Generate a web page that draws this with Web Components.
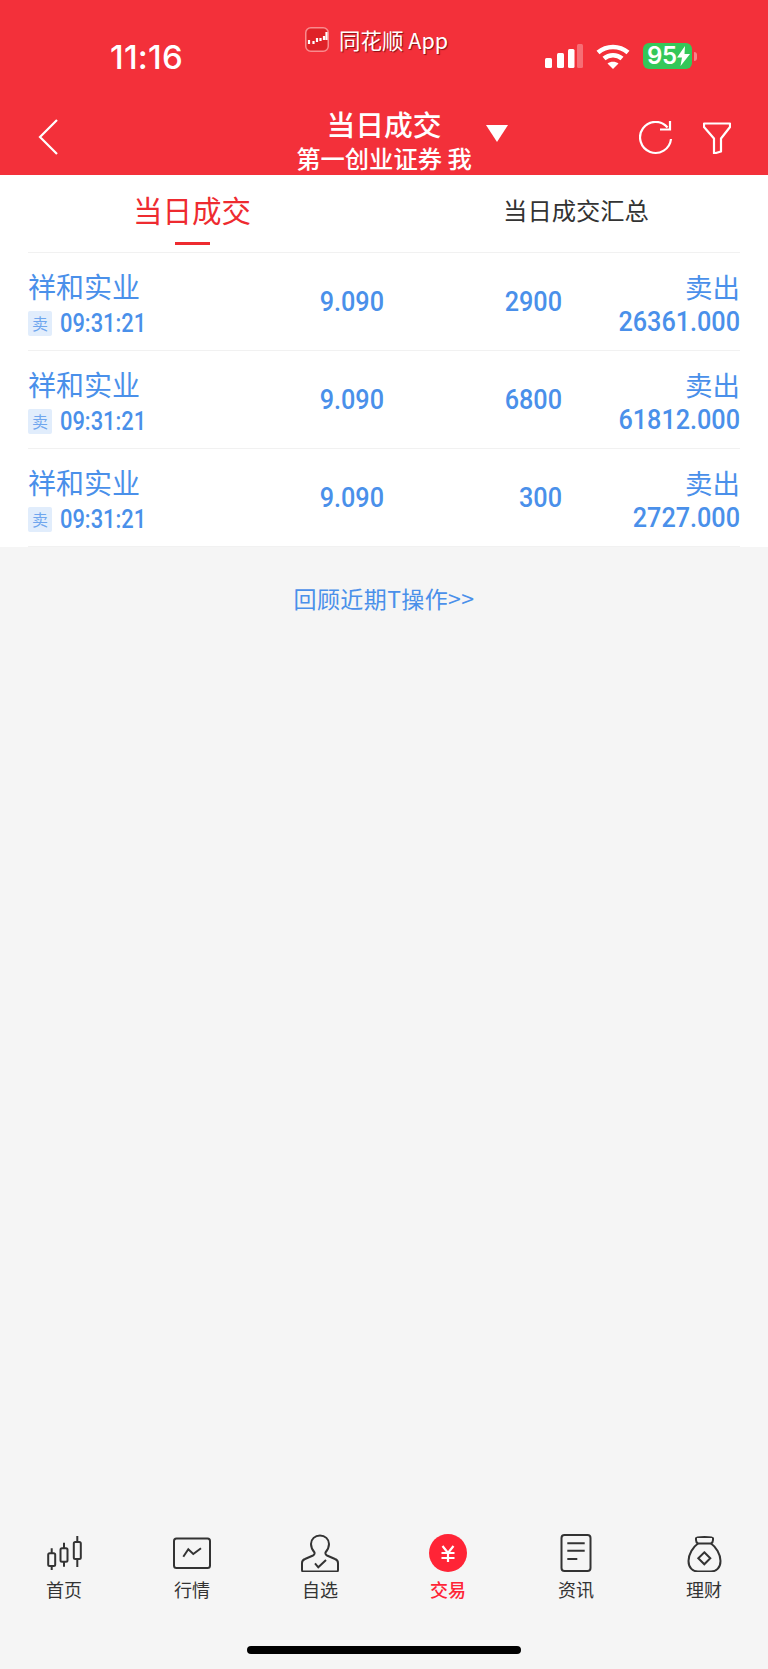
<!DOCTYPE html>
<html lang="zh">
<head>
<meta charset="utf-8">
<title>当日成交</title>
<style>
  html, body { margin: 0; padding: 0; }
  body { font-family: "Noto Sans CJK SC", "Noto Sans", sans-serif; background: #f5f5f5; }
  trade-page { height: 1669px; }
</style>
</head>
<body>
<trade-page>
  <status-bar slot="top"></status-bar>
  <nav-header slot="top" title="当日成交" subtitle="第一创业证券 我"></nav-header>
  <tab-bar slot="top" active="当日成交" other="当日成交汇总"></tab-bar>
  <trade-row name="祥和实业" time="09:31:21" price="9.090" qty="2900" side="卖出" amount="26361.000"></trade-row>
  <trade-row name="祥和实业" time="09:31:21" price="9.090" qty="6800" side="卖出" amount="61812.000"></trade-row>
  <trade-row name="祥和实业" time="09:31:21" price="9.090" qty="300" side="卖出" amount="2727.000"></trade-row>
  <review-link slot="after">回顾近期T操作&gt;&gt;</review-link>
  <bottom-nav slot="bottom">
    <nav-item label="首页">
      <svg viewBox="0 0 38 38" width="38" height="38" fill="none" stroke="#333" stroke-width="2">
        <path d="M6.700 14.300v5M6.700 32v4M19 8.700v5.600M19 27.700v5M32.300 2v6M32.300 25v8"/>
        <rect x="3.200" y="19.300" width="7" height="12.700" rx="1.500"/>
        <rect x="15.500" y="14.300" width="7" height="13.400" rx="1.500"/>
        <rect x="28.800" y="8" width="7" height="17" rx="1.500"/>
      </svg>
    </nav-item>
    <nav-item label="行情">
      <svg viewBox="0 0 38 38" width="38" height="38" fill="none" stroke="#333" stroke-width="2">
        <rect x="1" y="4.500" width="36" height="29.500" rx="2.500"/>
        <path d="M10.300 22.700l5-7.400 5 4.700 7.700-5.700"/>
      </svg>
    </nav-item>
    <nav-item label="自选">
      <svg viewBox="0 0 38 38" width="38" height="38" fill="none" stroke="#333" stroke-width="2">
        <path d="M13.500 18.500C10.500 15 10 12 10 10C10 5 14 1.500 19 1.500C24 1.500 28 5 28 10C28 13 27 15.500 24.500 18.500C24 20.500 25 21 26 21.500L34 25C36.500 26 37 27 37 29V36C37 37 36.500 37.500 35.500 37.500H2.500C1.500 37.500 1 37 1 36V29C1 27 1.500 26 4 25L12 21.500C13 21 14 20.500 13.500 18.500Z"/>
        <path d="M14 29.300l3.300 4L25 26"/>
      </svg>
    </nav-item>
    <nav-item label="交易" active>
      <svg viewBox="0 0 38 38" width="38" height="38" fill="none">
        <circle cx="19" cy="19" r="19" fill="#ff2436"/>
        <path d="M13.500 12l5.500 7 5.500-7M12.500 19h13M12.500 24h13M19 19v9" stroke="#fff" stroke-width="2.200"/>
      </svg>
    </nav-item>
    <nav-item label="资讯">
      <svg viewBox="0 0 38 38" width="38" height="38" fill="none" stroke="#333" stroke-width="2">
        <rect x="4.500" y="1" width="29" height="36" rx="3"/>
        <path d="M10.300 9.300h17.400M10.300 16.700h17.400M10.300 25h10"/>
      </svg>
    </nav-item>
    <nav-item label="理财">
      <svg viewBox="0 0 38 38" width="38" height="38" fill="none" stroke="#333" stroke-width="2">
        <path d="M11 4C11 2.500 28 2.500 28 4V6C28 8 27 9 26 9.500H13C12 9 11 8 11 6Z"/>
        <path d="M13 9.500C8 13 3.500 20 3.500 27C3.500 34 8 37.500 13 37.500H26C31 37.500 35.500 34 35.500 27C35.500 20 31 13 26 9.500"/>
        <path d="M19.300 18.300l6 6-6 6-6-6z"/>
      </svg>
    </nav-item>
  </bottom-nav>
</trade-page>

<script>
const CJK = `"Noto Sans CJK SC", "Noto Sans", sans-serif`;
const NUM = `Roboto, "Liberation Sans", sans-serif`;

class TradePage extends HTMLElement {
  constructor() {
    super();
    this.attachShadow({ mode: 'open' }).innerHTML = `
      <style>
        :host { display: flex; flex-direction: column; background: #f5f5f5; }
        .list { background: #fff; display: block; }
        .grow { flex: 1; }
      </style>
      <slot name="top"></slot>
      <div class="list"><slot></slot></div>
      <slot name="after"></slot>
      <div class="grow"></div>
      <slot name="bottom"></slot>
    `;
  }
}

class StatusBar extends HTMLElement {
  constructor() {
    super();
    this.attachShadow({ mode: 'open' }).innerHTML = `
      <style>
        :host { display: grid; grid-template-columns: 305px auto 1fr; height: 95px; background: #f3303a; color: #fff; }
        .time { font: 500 33px/38px Inter, sans-serif; letter-spacing: .2px; padding: 38px 0 0 110px; }
        .hint { display: flex; align-items: flex-start; gap: 10px; padding-top: 27px; }
        .logo { width: 24px; height: 25px; }
        .app { font: 400 21.500px/25px ${CJK}; text-shadow: 1px 1px 1px rgba(70,0,0,.65); }
        .icons { justify-self: end; display: flex; align-items: flex-start; padding: 43px 71px 0 0; }
        .signal { margin-top: 1px; }
        .wifi { margin: 1px 13px 0 13px; }
        .battery { display: flex; align-items: center; width: 49px; height: 26px; box-sizing: border-box; padding-left: 4px; background: #34c759; border-radius: 6px; font: 600 24px/26px Inter, sans-serif; letter-spacing: -0.3px; }
        .cap { width: 3px; height: 9px; margin: 9px 0 0 2px; background: rgba(255,255,255,.4); border-radius: 0 3px 3px 0; }
      </style>
      <div class="time">11:16</div>
      <div class="hint">
        <svg class="logo" viewBox="0 0 24 25">
          <rect x=".75" y=".75" width="22.500" height="23.500" rx="5" fill="#df2228" stroke="#f98b8e" stroke-width="1.500"/>
          <path d="M4 13v4M8.500 14v3M12 11v4M15.500 11v3M19 9v4M21.500 5v8" stroke="#fff" stroke-width="2.200"/>
        </svg>
        <span class="app">同花顺 App</span>
      </div>
      <div class="icons">
        <svg class="signal" width="38" height="25" viewBox="0 0 38 25" fill="#fff">
          <rect x="0" y="14" width="7" height="10" rx="1.500"/>
          <rect x="12" y="9" width="7" height="15" rx="1.500"/>
          <rect x="23" y="5" width="6.500" height="19" rx="1.500"/>
          <rect x="32" y="0" width="6" height="24" rx="1.500" fill="rgba(255,255,255,.3)"/>
        </svg>
        <svg class="wifi" width="34" height="25" viewBox="0 0 34 25" fill="none" stroke="#fff" stroke-width="4.500">
          <path d="M2 8.500C10.500 1 23.500 1 32 8.500"/>
          <path d="M8 14.500C13 10 21 10 26 14.500"/>
          <path d="M17 25l-5.500-5.500C14.500 17 19.500 17 22.500 19.500z" fill="#fff" stroke="none"/>
        </svg>
        <div class="battery">95<svg width="13" height="20" viewBox="0 0 13 20" fill="#fff"><path d="M8 0L0 11.500h5L3.500 20 13 8H7.500z"/></svg></div>
        <div class="cap"></div>
      </div>
    `;
  }
}

class NavHeader extends HTMLElement {
  constructor() {
    super();
    const title = this.getAttribute('title');
    const subtitle = this.getAttribute('subtitle');
    this.attachShadow({ mode: 'open' }).innerHTML = `
      <style>
        :host { display: grid; grid-template-columns: 1fr auto 1fr; height: 80px; background: #f3303a; color: #fff; }
        .left { padding: 24px 0 0 38px; }
        .mid { text-align: center; }
        .t { font: 500 28.800px/30px ${CJK}; margin-top: 14px; }
        .s { font: 500 24.300px/26px ${CJK}; margin-top: 6px; white-space: pre; }
        .right { display: flex; align-items: flex-start; padding-top: 25px; }
        .drop { margin: 5px 0 0 14px; }
        .refresh { margin-left: auto; margin-top: 1px; }
        .filter { margin: 2px 37px 0 30px; }
        svg { display: block; }
      </style>
      <div class="left">
        <svg width="20" height="36" viewBox="0 0 20 36" fill="none" stroke="#fff" stroke-width="2.200"><path d="M19 1L2 18l17 17"/></svg>
      </div>
      <div class="mid"><div class="t">${title}</div><div class="s">${subtitle}</div></div>
      <div class="right">
        <svg class="drop" width="22" height="17" viewBox="0 0 22 17" fill="#fff"><path d="M0 0h22L11 17z"/></svg>
        <svg class="refresh" width="34" height="34" viewBox="0 0 34 34" fill="none" stroke="#fff" stroke-width="2.200"><path d="M28.500 6.500A15.500 15.500 0 1 0 32 18"/><path d="M21 8.500L31 8.500 31 0" fill="none"/></svg>
        <svg class="filter" width="28" height="32" viewBox="0 0 28 32" fill="none" stroke="#fff" stroke-width="2.200"><path d="M1 1.500h26v3.500L18 16.500v13l-7 2V16.500L1 5z" stroke-linejoin="round"/></svg>
      </div>
    `;
  }
}

class TabBar extends HTMLElement {
  constructor() {
    super();
    this.attachShadow({ mode: 'open' }).innerHTML = `
      <style>
        :host { display: block; background: #fff; height: 78px; padding: 0 28px; box-sizing: border-box; }
        .wrap { display: grid; grid-template-columns: 1fr 1fr; height: 77px; margin: 0 -28px; }
        .tab { position: relative; display: flex; justify-content: center; font-family: ${CJK}; }
        .on { color: #ee2b30; font-size: 29.500px; line-height: 44px; font-weight: 400; padding-top: 12px; }
        .off { color: #333; font-size: 24.300px; line-height: 44px; padding-top: 13px; }
        .bar { position: absolute; top: 67px; left: 175px; width: 35px; height: 3px; background: #ee2b30; }
        .line { height: 1px; background: #f1f1f1; }
      </style>
      <div class="wrap">
        <div class="tab on">${this.getAttribute('active')}<span class="bar"></span></div>
        <div class="tab off">${this.getAttribute('other')}</div>
      </div>
      <div class="line"></div>
    `;
  }
}

class TradeRow extends HTMLElement {
  constructor() {
    super();
    const a = n => this.getAttribute(n);
    this.attachShadow({ mode: 'open' }).innerHTML = `
      <style>
        :host { display: block; margin: 0 28px; height: 98px; box-sizing: border-box; border-bottom: 1px solid #f1f1f1; color: #4a90ea; }
        .row { display: grid; grid-template-columns: 196px 160px 178px 1fr; align-items: center; height: 97px; }
        .name { font: 400 28px/34px ${CJK}; }
        .side { font: 400 27.500px/34px ${CJK}; }
        .first { align-self: start; padding-top: 16px; }
        .sub { display: flex; align-items: center; gap: 8px; margin-top: 8px; height: 25px; }
        .tag { width: 24px; height: 25px; background: #e1edfc; border-radius: 2px; display: flex; align-items: center; justify-content: center; color: #6fa6ee; font: 400 16px/25px ${CJK}; }
        .time { font: 500 25px/25px ${NUM}; transform: scaleX(.875); transform-origin: left center; white-space: nowrap; }
        .num { font: 500 28px/30px ${NUM}; text-align: right; transform: scaleX(.9); transform-origin: right center; white-space: nowrap; }
        .last { align-self: start; text-align: right; padding-top: 16px; }
        .last .num { margin-top: 4px; }
      </style>
      <div class="row">
        <div class="first">
          <div class="name">${a('name')}</div>
          <div class="sub"><span class="tag">卖</span><span class="time">${a('time')}</span></div>
        </div>
        <div class="num">${a('price')}</div>
        <div class="num">${a('qty')}</div>
        <div class="last">
          <div class="side">${a('side')}</div>
          <div class="num">${a('amount')}</div>
        </div>
      </div>
    `;
  }
}

class ReviewLink extends HTMLElement {
  constructor() {
    super();
    this.attachShadow({ mode: 'open' }).innerHTML = `
      <style>
        :host { display: block; text-align: center; padding-top: 34px; color: #4a90ea; font: 400 23px/34px ${CJK}; letter-spacing: .4px; }
      </style>
      <slot></slot>
    `;
  }
}

class BottomNav extends HTMLElement {
  constructor() {
    super();
    this.attachShadow({ mode: 'open' }).innerHTML = `
      <style>
        :host { display: block; padding-bottom: 15px; }
        .items { display: grid; grid-template-columns: repeat(6, 1fr); }
        .home { width: 274px; height: 8px; margin: 44px auto 0; background: #000; border-radius: 4px; }
      </style>
      <div class="items"><slot></slot></div>
      <div class="home"></div>
    `;
  }
}

class NavItem extends HTMLElement {
  constructor() {
    super();
    this.attachShadow({ mode: 'open' }).innerHTML = `
      <style>
        :host { display: flex; flex-direction: column; align-items: center; color: #333; }
        :host([active]) { color: #ff2436; }
        .ic { height: 38px; }
        ::slotted(svg) { display: block; }
        .lb { font: 400 18px/26px ${CJK}; margin-top: 4px; }
        :host([active]) .lb { font-weight: 500; }
      </style>
      <div class="ic"><slot></slot></div>
      <div class="lb">${this.getAttribute('label')}</div>
    `;
  }
}

customElements.define('trade-page', TradePage);
customElements.define('status-bar', StatusBar);
customElements.define('nav-header', NavHeader);
customElements.define('tab-bar', TabBar);
customElements.define('trade-row', TradeRow);
customElements.define('review-link', ReviewLink);
customElements.define('bottom-nav', BottomNav);
customElements.define('nav-item', NavItem);
</script>
</body>
</html>
